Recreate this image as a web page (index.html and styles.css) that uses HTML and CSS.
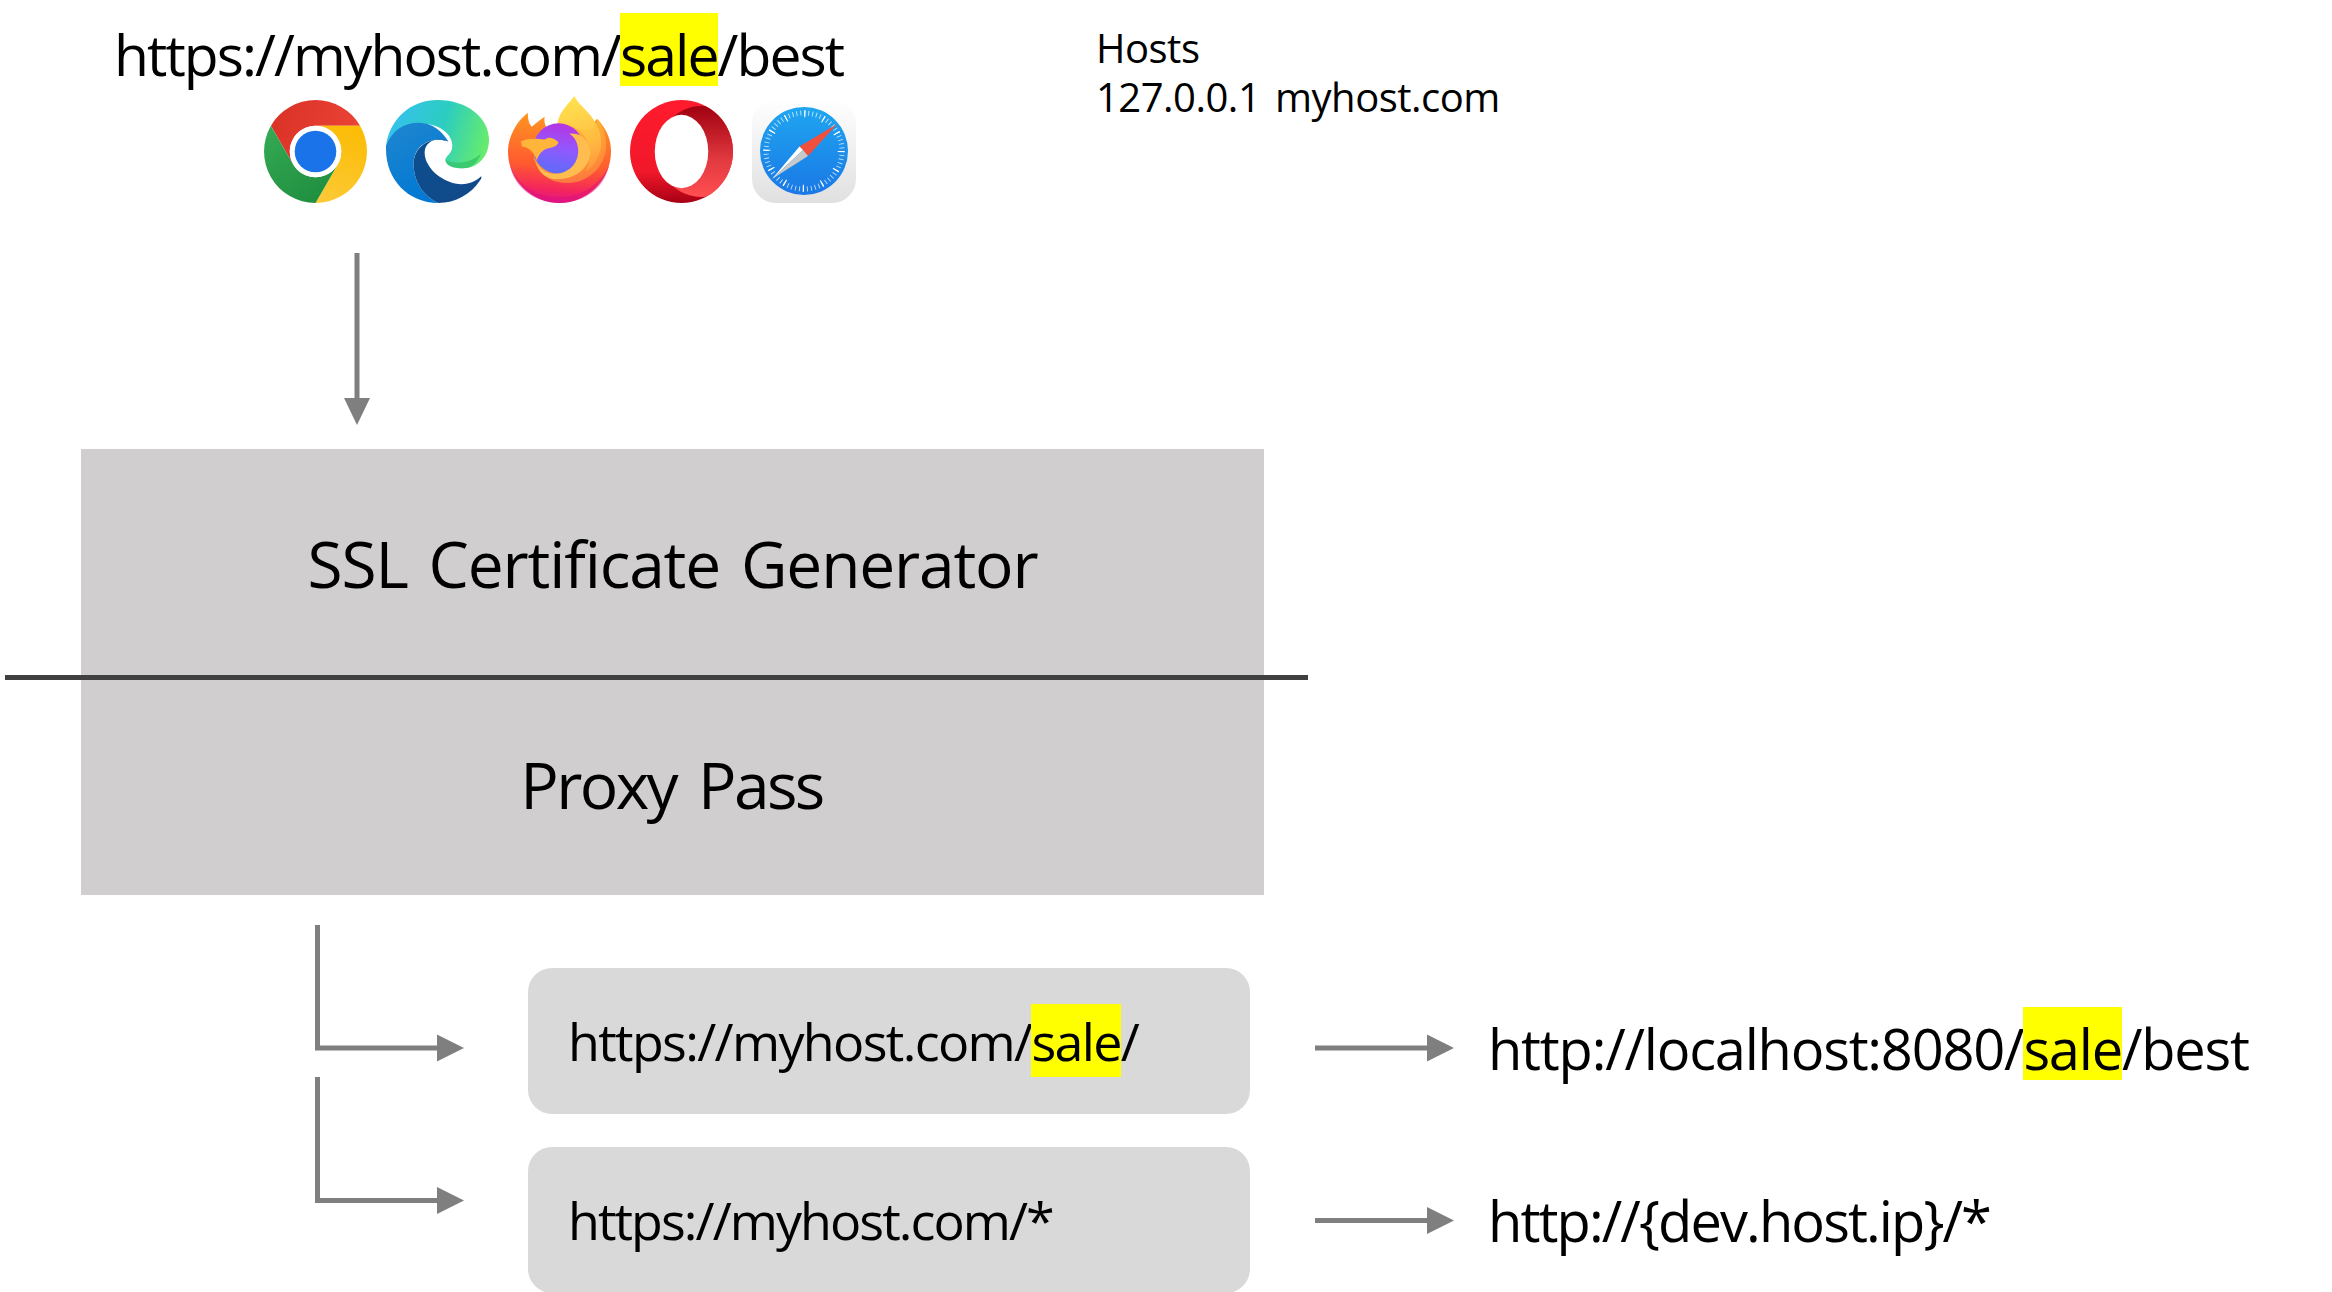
FILE: index.html
```html
<!DOCTYPE html>
<html lang="en">
<head>
<meta charset="utf-8">
<title>Proxy diagram</title>
<link rel="stylesheet" href="styles.css">
</head>
<body>
<main class="diagram">
  <div class="node url-top"><span>https://myhost.com/</span><span class="hl">sale</span><span>/best</span></div>
  <div class="node hosts"><div>Hosts</div><div>127.0.0.1&nbsp; myhost.com</div></div>

  <div class="node browsers">
    <svg class="icon" viewBox="0 0 104 104" aria-label="Chrome">
      <defs>
        <linearGradient id="cr" x1="0" y1="0" x2="1" y2="0.3"><stop offset="0" stop-color="#d93025"/><stop offset="1" stop-color="#ea4335"/></linearGradient>
        <linearGradient id="cg" x1="0.2" y1="0" x2="0.8" y2="1"><stop offset="0" stop-color="#34a853"/><stop offset="1" stop-color="#1e8e3e"/></linearGradient>
        <linearGradient id="cy" x1="0.7" y1="0" x2="0.4" y2="1"><stop offset="0" stop-color="#fbbc04"/><stop offset="1" stop-color="#fcc934"/></linearGradient>
      </defs>
      <path fill="url(#cr)" d="M7 26A52 52 0 0 1 97 26H52A26 26 0 0 0 29.5 65Z"/>
      <path fill="url(#cy)" d="M97 26A52 52 0 0 1 52 104L74.5 65A26 26 0 0 0 52 26Z"/>
      <path fill="url(#cg)" d="M7 26A52 52 0 0 0 52 104L74.5 65A26 26 0 0 1 29.5 65Z"/>
      <circle cx="52" cy="52" r="26" fill="#fff"/>
      <circle cx="52" cy="52" r="21" fill="#1a73e8"/>
    </svg>
    <svg class="icon" viewBox="0 0 104 104" aria-label="Edge">
      <defs>
        <linearGradient id="et" x1="0" y1="0.3" x2="1" y2="0.5"><stop offset="0" stop-color="#35c1f1"/><stop offset="0.55" stop-color="#2ccdc0"/><stop offset="1" stop-color="#66eb6e"/></linearGradient>
        <linearGradient id="eb" x1="0.2" y1="0.1" x2="0.6" y2="1"><stop offset="0" stop-color="#1b84cf"/><stop offset="1" stop-color="#0078d4"/></linearGradient>
        <linearGradient id="ed" x1="0" y1="0" x2="0.6" y2="1"><stop offset="0" stop-color="#0c4f8f"/><stop offset="1" stop-color="#114a8b"/></linearGradient>
      </defs>
      <path fill="url(#et)" d="M0 46C4 18 26 0 52 0C82 0 104 18 104 40C104 58 92 69 78 69C68 69 60 66 60 60C61 56 67 54 67 46C67 36 56 24 36 24C18 24 6 32 0 46Z"/>
      <path fill="#31c36a" opacity=".75" d="M96 54C92 64 86 69 78 69C68 69 60 66 60 60C64 64 84 66 96 54Z"/>
      <path fill="url(#eb)" d="M0 46C6 31 18 23 33 23C47 23 57 32 63 42C50 37 30 42 28 62C27 80 36 96 53 104C22 104 0 80 0 50Z"/>
      <path fill="url(#ed)" d="M63 42C52 36 39 42 39 53C39 70 60 85 76 85C85 85 92 81 96 77C97 78 96 80 95 81C86 95 70 104 53 104C36 96 27 80 28 62C30 44 48 36 63 42Z"/>
    </svg>
    <svg class="icon fox" viewBox="0 0 104 108" aria-label="Firefox">
      <defs>
        <linearGradient id="fb" x1="0.6" y1="0" x2="0.5" y2="1"><stop offset="0" stop-color="#ff9b1f"/><stop offset="0.6" stop-color="#ff5a30"/><stop offset="0.85" stop-color="#f5275a"/><stop offset="1" stop-color="#e31587"/></linearGradient>
        <linearGradient id="fy" x1="0.4" y1="0" x2="0.6" y2="1"><stop offset="0" stop-color="#ffe24d"/><stop offset="0.6" stop-color="#ffc247"/><stop offset="1" stop-color="#ff8a3d"/></linearGradient>
        <linearGradient id="fp" x1="0.6" y1="0" x2="0.4" y2="1"><stop offset="0" stop-color="#b833e1"/><stop offset="0.5" stop-color="#9059ff"/><stop offset="1" stop-color="#5b6df8"/></linearGradient>
        <linearGradient id="fr" x1="0.3" y1="0.1" x2="0.8" y2="1"><stop offset="0" stop-color="#ffce3d"/><stop offset="1" stop-color="#ff9a3d"/></linearGradient>
      </defs>
      <path fill="url(#fb)" d="M90 23C100 34 104 44 104 56C104 85 80 108 52 108C24 108 0 85 0 56C0 42 8 26 20 17C20 25 22 29 24 31C28 28 32 24 37 21C36 27 38 32 42 36L60 30L84 30Z"/>
      <path fill="#d9107f" opacity=".45" d="M2 70C10 92 30 102 52 102C72 102 92 92 102 70C98 92 78 108 52 108C26 108 6 92 2 70Z"/>
      <path fill="url(#fy)" d="M67 0C72 12 92 20 94 45C95 58 88 70 78 77C84 66 84 52 78 42C70 30 58 28 50 31C49 19 60 9 67 0Z"/>
      <path fill="url(#fr)" d="M90 23C97 30 100 44 99 54C96 72 84 82 72 86C58 90 38 88 30 72C24 62 26 56 32 52L60 30C70 32 90 40 90 23Z" opacity=".6"/>
      <circle cx="51" cy="53" r="25.5" fill="url(#fp)"/>
      <path fill="#ffbd4f" d="M62 38C74 36 83 46 83 57C83 72 68 84 50 84C38 84 30 76 28 66C36 82 56 82 66 70C74 60 72 44 62 38Z"/>
      <path fill="#ffb43a" d="M13 46C20 42 30 43 37 44C42 40 48 43 51 47C50 50 46 52 40 53C35 54 31 59 29 65C27 58 22 52 14 51Z"/>
    </svg>
    <svg class="icon" viewBox="0 0 104 104" aria-label="Opera">
      <defs>
        <linearGradient id="ob" x1="0" y1="0" x2="0" y2="1"><stop offset="0" stop-color="#a00010"/><stop offset="0.6" stop-color="#e23a40"/><stop offset="1" stop-color="#ff4f52"/></linearGradient>
        <linearGradient id="of" x1="0" y1="0" x2="0" y2="1"><stop offset="0" stop-color="#ff1b2d"/><stop offset="0.7" stop-color="#f0182a"/><stop offset="1" stop-color="#a70014"/></linearGradient>
        <clipPath id="oc"><circle cx="52" cy="52" r="52"/></clipPath>
      </defs>
      <circle cx="52" cy="52" r="52" fill="url(#of)"/>
      <ellipse cx="72" cy="52" rx="44" ry="46" fill="url(#ob)" clip-path="url(#oc)"/>
      <ellipse cx="52" cy="52" rx="27" ry="37" fill="#fff"/>
    </svg>
    <svg class="icon safari" viewBox="0 0 104 104" aria-label="Safari">
      <defs>
        <linearGradient id="sb" x1="0" y1="0" x2="0" y2="1"><stop offset="0" stop-color="#fff"/><stop offset="1" stop-color="#e0e0e0"/></linearGradient>
        <linearGradient id="sc" x1="0" y1="0" x2="0" y2="1"><stop offset="0" stop-color="#1fa6f0"/><stop offset="1" stop-color="#1a78e6"/></linearGradient>
      </defs>
      <rect x="0" y="0" width="104" height="104" rx="24" fill="url(#sb)"/>
      <circle cx="52" cy="52" r="44" fill="url(#sc)"/>
      <circle cx="52" cy="52" r="38" fill="none" stroke="#fff" stroke-opacity=".75" stroke-width="5" stroke-dasharray="0.9 3.08"/>
      <circle cx="52" cy="52" r="37.2" fill="none" stroke="#fff" stroke-width="7" stroke-dasharray="1.2 18.28"/>
      <path fill="#f0503c" d="M85 25L56 57L47.5 47.5Z"/>
      <path fill="#fff" d="M20 80L47.5 47.5L51 51Z"/>
      <path fill="#c9c9c9" d="M20 80L51 51L56 57Z"/>
    </svg>
  </div>

  <section class="node gateway">
    <div class="gateway-row row-ssl">SSL Certificate Generator</div>
    <div class="gateway-row row-proxy">Proxy Pass</div>
  </section>

  <svg class="wires" viewBox="0 0 2332 1292" aria-hidden="true">
    <path class="wire" d="M357 253V405"/>
    <polygon class="head" points="344,398 370,398 357,425"/>
    <rect class="divider" x="5" y="675" width="1303" height="5"/>
    <path class="wire" d="M317.5 925V1048H440"/>
    <polygon class="head" points="437,1034.5 464,1048 437,1061.5"/>
    <path class="wire" d="M317.5 1077V1200.5H440"/>
    <polygon class="head" points="437,1187 464,1200.5 437,1214"/>
    <path class="wire" d="M1315 1048H1430"/>
    <polygon class="head" points="1427,1034.5 1454,1048 1427,1061.5"/>
    <path class="wire" d="M1315 1220.5H1430"/>
    <polygon class="head" points="1427,1207 1454,1220.5 1427,1234"/>
  </svg>

  <div class="node route route-a"><span>https://myhost.com/</span><span class="hl">sale</span><span>/</span></div>
  <div class="node route route-b">https://myhost.com/*</div>

  <div class="node target target-a"><span>http://localhost:8080/</span><span class="hl">sale</span><span>/best</span></div>
  <div class="node target target-b">http://{dev.host.ip}/*</div>
</main>
</body>
</html>
```

FILE: styles.css
```css
* { box-sizing: border-box; }
html, body { margin: 0; padding: 0; background: #fff; }
.diagram {
  position: relative;
  width: 2332px;
  height: 1292px;
  overflow: hidden;
  font-family: "Open Sans", "Noto Sans", sans-serif;
  color: #000;
}
.node { position: absolute; white-space: nowrap; }
.hl { display: inline-block; background: #ff0; height: 73px; }

.url-top { left: 114px; top: 13px; height: 73px; font-size: 57px; line-height: 83px; letter-spacing: -1.93px; }
.hosts { left: 1096px; top: 23px; font-size: 40px; line-height: 49px; letter-spacing: -0.5px; word-spacing: -2.5px; }

.browsers { left: 264px; top: 95px; width: 600px; height: 108px; display: flex; gap: 19px; align-items: flex-end; }
.icon { width: 103px; height: 103px; display: block; flex: none; }
.fox { height: 107px; }
.safari { width: 104px; height: 104px; }

.gateway { left: 81px; top: 449px; width: 1183px; height: 446px; background: #d0cece; display: flex; flex-direction: column; }
.gateway-row { flex: 1; display: flex; align-items: center; justify-content: center; font-size: 64px; }
.row-ssl { letter-spacing: -1.15px; word-spacing: 5.5px; padding-top: 4px; }
.row-proxy { letter-spacing: -2.6px; word-spacing: 8px; padding-right: 2px; }

.wires { position: absolute; left: 0; top: 0; width: 2332px; height: 1292px; }
.wire { fill: none; stroke: #7f7f7f; stroke-width: 5px; }
.head { fill: #7f7f7f; }
.divider { fill: #404040; }

.route { left: 528px; width: 722px; height: 146px; background: #d9d9d9; border-radius: 24px; padding-left: 40px; display: flex; align-items: center; font-size: 52px; line-height: 73px; }
.route-a { top: 967.5px; letter-spacing: -1.67px; }
.route-b { top: 1146.5px; letter-spacing: -1.95px; }

.target { left: 1488px; font-size: 56px; }
.target-a { top: 1007px; height: 73px; line-height: 83px; letter-spacing: -1.22px; }
.target-b { top: 1184px; line-height: 73px; letter-spacing: -1.9px; }
```
